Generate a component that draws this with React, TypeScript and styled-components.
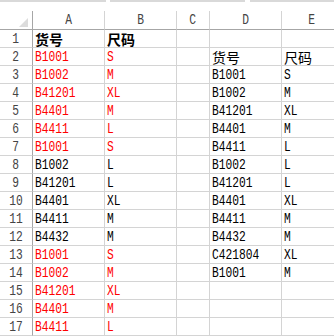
import styled, { createGlobalStyle } from "styled-components";

const GlobalStyle = createGlobalStyle`
  html, body {
    margin: 0;
    padding: 0;
    background: #ffffff;
  }
  body {
    width: 334px;
    height: 336px;
    overflow: hidden;
  }
`;

const Page = styled.div`
  width: 334px;
  height: 336px;
  overflow: hidden;
  background: #fff;
`;

const TopStrip = styled.div`
  height: 11px;
  display: flex;
  align-items: flex-start;
`;

const StripSegment = styled.div<{ $w: number; $gap?: boolean }>`
  width: ${(p) => p.$w}px;
  flex: none;
  height: 2px;
  background: ${(p) => (p.$gap ? "transparent" : "#d9d9d9")};
`;

const Sheet = styled.div`
  display: grid;
  grid-template-columns: 33px 72px 72px 33px 72px 60px;
  grid-auto-rows: 18px;
  grid-template-rows: 19px;
`;

const HeadCell = styled.div<{ $corner?: boolean }>`
  box-sizing: border-box;
  position: relative;
  display: flex;
  align-items: center;
  justify-content: center;
  border-bottom: 1px solid #a6a6a6;
  border-right: 1px solid ${(p) => (p.$corner ? "#a6a6a6" : "#d4d4d4")};
  color: #444;
  font-family: "Liberation Mono", monospace;
  font-size: 15px;
  padding-top: 1px;
`;

const Corner = styled.div`
  position: absolute;
  right: 4px;
  bottom: 2px;
  width: 0;
  height: 0;
  border-left: 9px solid transparent;
  border-bottom: 9px solid #dcdcdc;
`;

const RowNum = styled.div`
  box-sizing: border-box;
  display: flex;
  align-items: center;
  justify-content: center;
  border-bottom: 1px solid #d4d4d4;
  border-right: 1px solid #a6a6a6;
  color: #444;
  font-family: "Liberation Mono", monospace;
  font-size: 15px;
  padding-top: 2px;
`;

const Cell = styled.div<{ $red?: boolean }>`
  box-sizing: border-box;
  display: flex;
  align-items: center;
  padding: 2px 0 0 2px;
  border-bottom: 1px solid #d4d4d4;
  border-right: 1px solid #d4d4d4;
  color: ${(p) => (p.$red ? "#ff0000" : "#000")};
  overflow: hidden;
  white-space: nowrap;
`;

const Latin = styled.span<{ $center?: boolean }>`
  display: inline-block;
  font-family: "Liberation Mono", monospace;
  font-size: 15px;
  transform: scaleX(0.75);
  transform-origin: ${(p) => (p.$center ? "center" : "left")};
`;

const Han = styled.span<{ $bold?: boolean }>`
  font-family: "Noto Sans CJK SC", sans-serif;
  font-size: 14px;
  line-height: 16px;
  font-weight: ${(p) => (p.$bold ? 700 : 400)};
  margin-top: -2px;
`;

type Entry = { code: string; size: string; red?: boolean };

const left: Entry[] = [
  { code: "B1001", size: "S", red: true },
  { code: "B1002", size: "M", red: true },
  { code: "B41201", size: "XL", red: true },
  { code: "B4401", size: "M", red: true },
  { code: "B4411", size: "L", red: true },
  { code: "B1001", size: "S", red: true },
  { code: "B1002", size: "L" },
  { code: "B41201", size: "L" },
  { code: "B4401", size: "XL" },
  { code: "B4411", size: "M" },
  { code: "B4432", size: "M" },
  { code: "B1001", size: "S", red: true },
  { code: "B1002", size: "M", red: true },
  { code: "B41201", size: "XL", red: true },
  { code: "B4401", size: "M", red: true },
  { code: "B4411", size: "L", red: true },
];

const right: Entry[] = [
  { code: "B1001", size: "S" },
  { code: "B1002", size: "M" },
  { code: "B41201", size: "XL" },
  { code: "B4401", size: "M" },
  { code: "B4411", size: "L" },
  { code: "B1002", size: "L" },
  { code: "B41201", size: "L" },
  { code: "B4401", size: "XL" },
  { code: "B4411", size: "M" },
  { code: "B4432", size: "M" },
  { code: "C421804", size: "XL" },
  { code: "B1001", size: "M" },
];

function renderValue(value: string, bold?: boolean) {
  if (!value) return null;
  if (/[\u4e00-\u9fff]/.test(value)) return <Han $bold={bold}>{value}</Han>;
  return <Latin>{value}</Latin>;
}

export default function App() {
  const rows: { a: string; b: string; red?: boolean; bold?: boolean; d: string; e: string }[] = [];
  for (let i = 0; i < 17; i++) {
    const row = { a: "", b: "", red: false, bold: false, d: "", e: "" };
    if (i === 0) {
      row.a = "货号";
      row.b = "尺码";
      row.bold = true;
    } else {
      const l = left[i - 1];
      row.a = l.code;
      row.b = l.size;
      row.red = !!l.red;
    }
    if (i === 1) {
      row.d = "货号";
      row.e = "尺码";
    } else if (i >= 2 && right[i - 2]) {
      row.d = right[i - 2].code;
      row.e = right[i - 2].size;
    }
    rows.push(row);
  }

  return (
    <Page>
      <GlobalStyle />
      <TopStrip>
        <StripSegment $w={106} />
        <StripSegment $w={4} $gap />
        <StripSegment $w={135} />
        <StripSegment $w={5} $gap />
        <StripSegment $w={84} />
      </TopStrip>
      <Sheet>
        <HeadCell $corner>
          <Corner />
        </HeadCell>
        {["A", "B", "C", "D", "E"].map((c) => (
          <HeadCell key={c}>
            <Latin $center>{c}</Latin>
          </HeadCell>
        ))}
        {rows.map((r, i) => [
          <RowNum key={`n${i}`}>
            <Latin $center>{i + 1}</Latin>
          </RowNum>,
          <Cell key={`a${i}`} $red={r.red}>
            {renderValue(r.a, r.bold)}
          </Cell>,
          <Cell key={`b${i}`} $red={r.red}>
            {renderValue(r.b, r.bold)}
          </Cell>,
          <Cell key={`c${i}`} />,
          <Cell key={`d${i}`}>{renderValue(r.d)}</Cell>,
          <Cell key={`e${i}`}>{renderValue(r.e)}</Cell>,
        ])}
      </Sheet>
    </Page>
  );
}
